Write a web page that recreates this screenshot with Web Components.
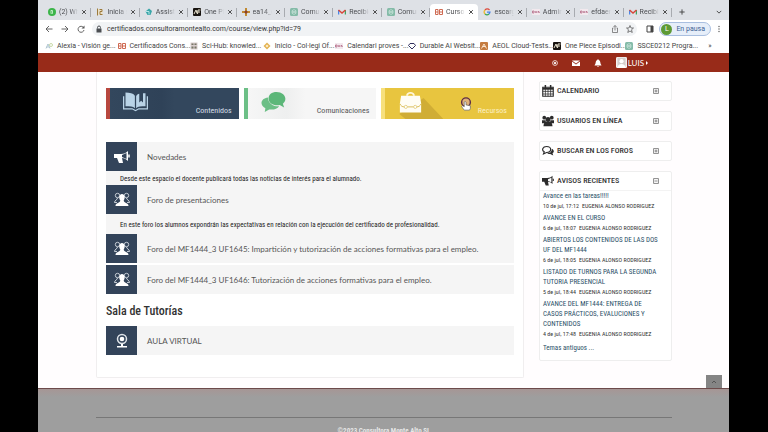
<!DOCTYPE html>
<html lang="es">
<head>
<meta charset="utf-8">
<meta name="viewport" content="width=device-width, initial-scale=1">
<title>Curso</title>
<style>
  * { box-sizing: border-box; }
  body { margin: 0; background: #000; font-family: Lato, "Open Sans", sans-serif; }
</style>
</head>
<body>
<browser-window>
  <tab-strip slot="chrome">
    <browser-tab icon="whatsapp">(2) WhatsApp</browser-tab>
    <browser-tab icon="crest">Inicia sesión</browser-tab>
    <browser-tab icon="assist">Assistència</browser-tab>
    <browser-tab icon="af">One Piece</browser-tab>
    <browser-tab icon="cross">ea14_curso</browser-tab>
    <browser-tab icon="gpt">Comunicación</browser-tab>
    <browser-tab icon="gmail">Recibidos</browser-tab>
    <browser-tab icon="gpt">Comunicación</browser-tab>
    <browser-tab icon="course" active>Curso: MF1444</browser-tab>
    <browser-tab icon="google">escargot</browser-tab>
    <browser-tab icon="gva">Administració</browser-tab>
    <browser-tab icon="gva">efdaem</browser-tab>
    <browser-tab icon="gmail">Recibidos</browser-tab>
  </tab-strip>
  <address-bar slot="chrome" url="certificados.consultoramontealto.com/course/view.php?id=79">En pausa</address-bar>
  <bookmark-bar slot="chrome">
    <bookmark-link icon="alexia">Alexia - Visión ge...</bookmark-link>
    <bookmark-link icon="course">Certificados Cons...</bookmark-link>
    <bookmark-link icon="scihub">Sci-Hub: knowled...</bookmark-link>
    <bookmark-link icon="diamond">Inicio - Col·legi Of...</bookmark-link>
    <bookmark-link icon="gva">Calendari proves -...</bookmark-link>
    <bookmark-link icon="heart">Durable AI Websit...</bookmark-link>
    <bookmark-link icon="aeol">AEOL Cloud-Tests...</bookmark-link>
    <bookmark-link icon="af">One Piece Episodi...</bookmark-link>
    <bookmark-link icon="gpt">SSCE0212 Progra...</bookmark-link>
  </bookmark-bar>

  <site-header>LUIS</site-header>
  <course-layout>
    <tile-row>
      <course-tile icon="book" theme="navy">Contenidos</course-tile>
      <course-tile icon="chat" theme="green">Comunicaciones</course-tile>
      <course-tile icon="case" theme="yellow">Recursos</course-tile>
    </tile-row>
    <activity-list>
      <activity-row icon="megaphone">Novedades
        <span slot="note">Desde este espacio el docente publicará todas las noticias de interés para el alumnado.</span>
      </activity-row>
      <activity-row icon="people" note-size="tall">Foro de presentaciones
        <span slot="note">En este foro los alumnos expondrán las expectativas en relación con la ejecución del certificado de profesionalidad.</span>
      </activity-row>
      <activity-row icon="people" spaced>Foro del MF1444_3 UF1645: Impartición y tutorización de acciones formativas para el empleo.</activity-row>
      <activity-row icon="people">Foro del MF1444_3 UF1646: Tutorización de acciones formativas para el empleo.</activity-row>
    </activity-list>
    <section-title>Sala de Tutorías</section-title>
    <activity-list>
      <activity-row icon="webcam">AULA VIRTUAL</activity-row>
    </activity-list>

    <side-block slot="side" icon="calendar" label="CALENDARIO"></side-block>
    <side-block slot="side" icon="group" label="USUARIOS EN LÍNEA"></side-block>
    <side-block slot="side" icon="comments" label="BUSCAR EN LOS FOROS"></side-block>
    <side-block slot="side" icon="horn" label="AVISOS RECIENTES" open>
      <news-item when="10 de jul, 17:12">Avance en las tareas!!!!!</news-item>
      <news-item when="6 de jul, 18:07">AVANCE EN EL CURSO</news-item>
      <news-item when="6 de jul, 18:05">ABIERTOS LOS CONTENIDOS DE LAS DOS UF DEL MF1444</news-item>
      <news-item when="5 de jul, 18:44">LISTADO DE TURNOS PARA LA SEGUNDA TUTORIA PRESENCIAL</news-item>
      <news-item when="4 de jul, 17:48">AVANCE DEL MF1444: ENTREGA DE CASOS PRÁCTICOS, EVALUCIONES Y CONTENIDOS</news-item>
      <more-link>Temas antiguos ...</more-link>
    </side-block>
  </course-layout>
  <site-footer>©2023 Consultora Monte Alto SL</site-footer>
</browser-window>

<script>
const CONDENSED = `"Roboto Condensed", "Liberation Sans Narrow", "Liberation Sans", sans-serif`;

const ICONS = {
  whatsapp: `<circle cx="8" cy="8" r="8" fill="#3cb54a"/><path d="M6 4.500v7M6 5h3v6H7" fill="none" stroke="#d9f5dc" stroke-width="1.600"/>`,
  crest: `<path d="M2 2h11v12H2z" fill="#eadfc6"/><path d="M3 1v14M7 3h5v4H8v6h5" fill="none" stroke="#9b7a3c" stroke-width="2"/>`,
  assist: `<path d="M8 1l6 5-3 8H5L1 7z" fill="#3aa6a8"/><path d="M1 7h7v6" fill="none" stroke="#b7e4e6" stroke-width="2"/>`,
  af: `<rect width="16" height="16" rx="2" fill="#17130f"/><path d="M2 12l4-8 2 7M9 12l1-8h5M9 8h5" fill="none" stroke="#e9e3cf" stroke-width="2"/>`,
  cross: `<path d="M6 0h4v6h6v4h-6v6H6v-6H0V6h6z" fill="#c18a32"/><circle cx="8" cy="8" r="3" fill="#8a3f2e"/>`,
  gpt: `<rect width="16" height="16" rx="3" fill="#84bba8"/><path d="M8 3l4 2.500v5L8 13l-4-2.500v-5zM4 6l8 4M12 6l-8 4" fill="none" stroke="#e2f3ec" stroke-width="1"/>`,
  gmail: `<path d="M1 13V4" stroke="#4a86e8" stroke-width="3"/><path d="M15 13V4" stroke="#43a463" stroke-width="3"/><path d="M1 4l7 6 7-6" fill="none" stroke="#d8473b" stroke-width="3"/>`,
  course: `<path d="M1 3h5v10H1zM9 3h6v10H9zM2 8h4M9 8h6" fill="none" stroke="#cf6a52" stroke-width="2"/>`,
  google: `<path d="M13 4a6 6 0 0 0-9 0" fill="none" stroke="#dd4b3e" stroke-width="2.500"/><path d="M4 4a6 6 0 0 0 0 8" fill="none" stroke="#edb82e" stroke-width="2.500"/><path d="M4 12a6 6 0 0 0 8 0" fill="none" stroke="#3aa757" stroke-width="2.500"/><path d="M8 8h6a6 6 0 0 1-2 4" fill="none" stroke="#4381ea" stroke-width="2.500"/>`,
  gva: `<rect y="2" width="16" height="12" fill="#f3e9ee"/><path d="M1 6h3v4H1zM6 6l2 4 2-4M12 10l1-4 2 4" fill="none" stroke="#b46a86" stroke-width="1.600"/>`,
  alexia: `<path d="M2 13l4-9 4 9M3 10h6" fill="none" stroke="#9ab6c4" stroke-width="1.500"/><circle cx="12" cy="6" r="3" fill="none" stroke="#b8cf8f" stroke-width="1.500"/>`,
  scihub: `<path d="M1 1h14v14H1z" fill="#d8cccc"/><path d="M3 3h4v3H3zM9 3h4v3H9zM3 9h4v4H3zM9 9h4v4H9z" fill="#776"/>`,
  diamond: `<path d="M8 1l7 7-7 7-7-7z" fill="#e3b352"/><path d="M8 5l3 3-3 3-3-3z" fill="#fff0d0"/>`,
  heart: `<path d="M4 3h8l3 4-7 7-7-7z" fill="none" stroke="#33335f" stroke-width="2"/>`,
  aeol: `<rect width="16" height="16" rx="2" fill="#c57c41"/><path d="M3 13l5-9 5 9M5 9h6" fill="none" stroke="#fbe6cf" stroke-width="2"/>`,
  back: `<path d="M15 8H2M8 2L2 8l6 6" fill="none" stroke="#555" stroke-width="1.800"/>`,
  forward: `<path d="M1 8h13M8 2l6 6-6 6" fill="none" stroke="#555" stroke-width="1.800"/>`,
  reload: `<path d="M13 5a6 6 0 1 0 1 5" fill="none" stroke="#555" stroke-width="1.800"/><path d="M15 1v6H9z" fill="#555"/>`,
  lock: `<path d="M3 7h10v8H3z" fill="#4b4e52"/><path d="M5 7V5a3 3 0 0 1 6 0v2" fill="none" stroke="#4b4e52" stroke-width="2"/>`,
  share: `<path d="M5 6H3v9h10V6h-2M8 11V1M5 4l3-3 3 3" fill="none" stroke="#666" stroke-width="1.500"/>`,
  star: `<path d="M8 1l2 5h5l-4 3.500 1.500 5.500L8 12l-4.500 3L5 9.500 1 6h5z" fill="none" stroke="#555" stroke-width="1.500"/>`,
  panel: `<path d="M2 2h12v12H2z" fill="none" stroke="#444" stroke-width="2"/><path d="M9 2h5v12H9z" fill="#444"/>`,
  kebab: `<g fill="#666"><circle cx="8" cy="3" r="1.500"/><circle cx="8" cy="8" r="1.500"/><circle cx="8" cy="13" r="1.500"/></g>`,
  close: `<path d="M3 3l10 10M13 3L3 13" stroke="#444" stroke-width="2.500"/>`,
  plus: `<path d="M8 1v14M1 8h14" stroke="#444" stroke-width="2.500"/>`,
  chevron: `<path d="M2 5l6 6 6-6" fill="none" stroke="#444" stroke-width="2.500"/>`,
  target: `<circle cx="8" cy="8" r="6.500" fill="none" stroke="#fff" stroke-width="2"/><circle cx="8" cy="8" r="3" fill="#fff"/>`,
  mail: `<path d="M0 3h16L8 9zM0 5l8 6 8-6v9H0z" fill="#fff"/>`,
  bell: `<path d="M8 0l1.500 2C12 3 12.500 5 13 9l2 4H1l2-4c.5-4 1-6 3.500-7zM6 14h4l-2 2z" fill="#fff"/>`,
  avatar: `<rect width="16" height="16" rx="2" fill="#f7f3f1"/><path d="M2 1h12v14H2z" fill="#d5cfcd"/><circle cx="8" cy="6" r="3" fill="#fff"/><path d="M2 16c0-8 12-8 12 0z" fill="#fff"/>`,
  book: `<path d="M2 8H0v21h15l5 3 5-3h15V8h-2v19H25l-5 3-5-3H2z" fill="#b9d3e6"/><path d="M4 2c7 0 12 1 15 5v20c-3-3-8-3-15-3zM36 3v21c-7 0-12 0-15 3V8c1-2 3-4 5-4v14l3-3 3 3V3z" fill="#b9d3e6"/>`,
  chat: `<path d="M25 1c8 0 14 5 14 11 0 4-2 6-4 8l2 6-7-4c-9 2-18-3-18-10S17 1 25 1z" fill="#5cb779"/><path d="M11 10c0 9 9 15 18 14-3 5-10 6-16 5l-7 4 1-6C-4 21 1 11 11 10z" fill="#6cbf86"/>`,
  case: `<path d="M13 7c0-8 14-8 14 0h-3c0-4-8-4-8 0z" fill="#fff6dc"/><path d="M5 7h30l2 12v15H3V19z" fill="#fffdf5"/><path d="M3 20c2 4 4 5 7 5M37 20c-2 4-4 5-7 5M15 25h10" fill="none" stroke="#d9bb52" stroke-width="1.500"/><circle cx="12.500" cy="25" r="2.500" fill="#fff" stroke="#d9bb52"/><circle cx="27.500" cy="25" r="2.500" fill="#fff" stroke="#d9bb52"/>`,
  megaphone: `<path d="M0 5h7c3 0 5-1 7-3v10c-2-2-4-3-6-3l1 5H5L3 9H0z" fill="#fff"/><path d="M8 6l4.500-2v6L8 8z" fill="#33445a"/><path d="M15 5.500v3" stroke="#fff" stroke-width="1.500"/>`,
  people: `<g fill="none" stroke="#e6ebf0" stroke-width=".8"><circle cx="3.500" cy="3.500" r="2.200"/><circle cx="12.500" cy="3.500" r="2.200"/><path d="M3.500 6c0 2-3 2-3 4.500H3M12.500 6c0 2 3 2 3 4.500H13"/></g><path d="M8 2c3 0 3.500 4 1.700 6.500 0 2.500 4.800 2 4.800 5.500h-13c0-3.500 4.800-3 4.800-5.500C4.500 6 5 2 8 2z" fill="#fff"/>`,
  webcam: `<circle cx="8" cy="6" r="4.500" fill="none" stroke="#dfe4e9" stroke-width="1.500"/><circle cx="8" cy="6" r="2.300" fill="#fff"/><path d="M7 11h2v2h4v1.500H3V13h4z" fill="#fff"/>`,
  calendar: `<path d="M1 3h14v12H1z" fill="none" stroke="#2c2c2c" stroke-width="1.500"/><path d="M1 5h14" stroke="#2c2c2c" stroke-width="2.500"/><path d="M1 8.500h14M1 12h14M4.500 5v10M8 5v10M11.500 5v10" stroke="#2c2c2c" stroke-width="1"/><path d="M4.500 0v4M11.500 0v4" stroke="#2c2c2c" stroke-width="2"/>`,
  group: `<g fill="#2c2c2c"><circle cx="3" cy="3.500" r="2.500"/><circle cx="13" cy="3.500" r="2.500"/><circle cx="8" cy="6" r="3.200"/><path d="M0 7h5v4H0zM11 7h5v4h-5zM2 15c0-9 12-9 12 0z"/></g>`,
  comments: `<path d="M6 2c3 0 5.500 1.500 5.500 4S9 10 6 10l-4 2 1-3C-1 7 1 2 6 2z" fill="#fff" stroke="#2c2c2c" stroke-width="1.500"/><path d="M13 5c4 2 3 5 1 6l1 3-4-2c-2 0-3 0-4-1 4 0 6-2 6-6z" fill="#2c2c2c"/>`,
  horn: `<path d="M0 4h7c3 0 5-1 7-3v11c-2-2-4-3-6-3l1 5H5L3 9H0z" fill="#2c2c2c"/><path d="M8 5.500l4.500-2v6L8 8z" fill="#fff"/><path d="M15 5v3" stroke="#2c2c2c" stroke-width="1.500"/>`,
  expand: `<path d="M1.500 1.500h13v13h-13zM8 4v8M4 8h8" fill="none" stroke="#555" stroke-width="1.800"/>`,
  collapse: `<path d="M1.500 1.500h13v13h-13zM4 8h8" fill="none" stroke="#555" stroke-width="1.800"/>`,
  up: `<path d="M4 10l4-4 4 4" fill="none" stroke="#555" stroke-width="2"/>`,
  hand: `<circle cx="8" cy="6" r="5" fill="#e0b27a" stroke="#5b2c46" stroke-width="1.600"/><path d="M6 15l-3-4 1-1 2 1V6c0-1 2-1 2 0v3l5 1v3l-1 2z" fill="#fff" stroke="#555" stroke-width=".7"/>`,
};
const WIDE = ["book", "chat", "case"];

function icon(name) {
  const box = WIDE.includes(name) ? "0 0 40 36" : "0 0 16 16";
  return `<svg class="icon ${name}" viewBox="${box}" aria-hidden="true">${ICONS[name]}</svg>`;
}

const BASE = `
  * { box-sizing: border-box; }
  :host { display: block; }
  .icon { display: block; flex: none; width: 8px; height: 8px; }
  button { display: flex; align-items: center; justify-content: center; margin: 0; padding: 0; border: 0; background: none; font: inherit; color: inherit; cursor: pointer; }
  a { color: inherit; text-decoration: none; }
`;

class BaseElement extends HTMLElement {
  constructor() {
    super();
    this.attachShadow({ mode: "open" });
  }

  connectedCallback() {
    this.shadowRoot.innerHTML = `<style>${BASE}${this.css}</style>${this.html}`;
  }

  attr(name) {
    return this.getAttribute(name) || "";
  }
}

class BrowserWindow extends BaseElement {
  css = `
    :host { position: relative; display: flex; flex-direction: column; height: 100vh; margin: 0 39px 0 38px; overflow: hidden; background: #fffdfe; }
    .chrome { flex: none; font-family: Roboto, sans-serif; background: #fff; }
    .top { position: absolute; right: 7px; bottom: 44px; width: 16px; height: 13px; background: #858585; }
  `;
  html = `
    <div class="chrome"><slot name="chrome"></slot></div>
    <slot></slot>
    <button class="top" aria-label="Subir">${icon("up")}</button>
  `;
}

class TabStrip extends BaseElement {
  css = `
    :host { display: flex; align-items: center; height: 20px; padding: 0 7px 0 5px; background: #dee1e6; }
    .tabs { flex: 1; display: grid; grid-template-columns: repeat(13, minmax(0, 1fr)); align-self: stretch; padding-top: 4px; }
    .end { flex: none; display: flex; align-items: center; justify-content: space-between; width: 50px; padding: 4px 0 0 7px; }
    .icon { width: 6px; height: 6px; }
  `;
  html = `
    <div class="tabs"><slot></slot></div>
    <div class="end">
      <button aria-label="Nueva pestaña">${icon("plus")}</button>
      <button aria-label="Buscar pestañas">${icon("chevron")}</button>
    </div>
  `;
}

class BrowserTab extends BaseElement {
  get css() {
    return `
      :host { display: flex; align-items: center; gap: 3px; height: 16px; padding-left: 5px; font-size: 7px; color: #4a4c50; border-radius: 4px 4px 0 0; }
      :host([active]) { background: #fff; }
      .title { flex: 1; overflow: hidden; white-space: nowrap; line-height: 10px; mask-image: linear-gradient(90deg, #000 60%, transparent); }
      .icon.close { width: 6px; height: 6px; }
      .line { width: 1px; height: 9px; background: #a8abb0; }
      :host([active]) .line { background: none; }
    `;
  }
  get html() {
    return `${icon(this.attr("icon"))}<span class="title"><slot></slot></span>
      <button aria-label="Cerrar">${icon("close")}</button><span class="line"></span>`;
  }
}

class AddressBar extends BaseElement {
  css = `
    :host { display: flex; align-items: center; height: 18px; padding: 0 6px 0 7px; font-size: 7px; }
    .nav { display: flex; gap: 8px; margin-right: 7px; }
    .field { flex: 1; display: flex; align-items: center; gap: 7px; min-width: 0; height: 14px; padding: 0 3px; border-radius: 7px; background: #f1f3f5; }
    .field .lock { margin-right: -3px; }
    input { flex: 1; min-width: 0; margin: 0; padding: 0; border: 0; outline: 0; font: inherit; color: #333; background: none; }
    .icon.panel { margin: 0 5px 0 9px; }
    .profile { gap: 4px; height: 14px; padding: 0 5px 0 1px; border: 1px solid #a9bfe0; border-radius: 7px; color: #3d5f94; background: #e6eef9; }
    .face { width: 11px; height: 11px; border-radius: 50%; background: #5d9a35; color: #fff; line-height: 11px; text-align: center; }
    .icon.kebab { margin-left: 4px; }
  `;
  get html() {
    return `
      <div class="nav">
        <button aria-label="Atrás">${icon("back")}</button>
        <button aria-label="Adelante">${icon("forward")}</button>
        <button aria-label="Recargar">${icon("reload")}</button>
      </div>
      <div class="field">${icon("lock")}
        <input type="text" aria-label="Dirección" value="${this.attr("url")}">
        ${icon("share")}${icon("star")}
      </div>
      ${icon("panel")}
      <button class="profile"><span class="face">L</span><slot></slot></button>
      ${icon("kebab")}
    `;
  }
}

class BookmarkBar extends BaseElement {
  css = `
    :host { display: flex; align-items: center; height: 15px; padding: 0 7px; font-size: 7px; color: #444; }
    .links { flex: 1; display: grid; grid-template-columns: repeat(9, minmax(0, 1fr)); }
    .more { flex: none; justify-content: center; width: 24px; }
  `;
  html = `<div class="links"><slot></slot></div><button class="more" aria-label="Más marcadores">»</button>`;
}

class BookmarkLink extends BaseElement {
  css = `
    a { display: flex; align-items: center; gap: 4px; line-height: 10px; white-space: nowrap; }
  `;
  get html() {
    return `<a href="#">${icon(this.attr("icon"))}<slot></slot></a>`;
  }
}

class SiteHeader extends BaseElement {
  css = `
    :host { flex: none; display: flex; align-items: center; justify-content: flex-end; gap: 14px; height: 19px; padding-right: 81px; background: #982b19; color: #fff; font-size: 8px; }
    .icon.target { width: 6px; height: 6px; }
    .icon.avatar { width: 11px; height: 11px; }
    .user { gap: 1px; }
    .caret { border: 2px solid transparent; border-left-color: #fff; border-right: 0; margin-left: 1px; }
  `;
  html = `
    <button aria-label="Objetivos">${icon("target")}</button>
    <button aria-label="Mensajes">${icon("mail")}</button>
    <button aria-label="Avisos">${icon("bell")}</button>
    <button class="user">${icon("avatar")}<slot></slot><span class="caret"></span></button>
  `;
}

class CourseLayout extends BaseElement {
  css = `
    :host { flex: none; display: grid; grid-template-columns: minmax(0, 1fr) 133px; gap: 15px; padding: 0 57px 10px 58px; }
    main { padding: 16px 9px 22px; border: 1px solid #f0eeef; border-top: 0; border-radius: 0 0 2px 2px; background: #fff; }
    aside { display: flex; flex-direction: column; gap: 10px; padding-top: 9px; }
  `;
  html = `<main><slot></slot></main><aside><slot name="side"></slot></aside>`;
}

class TileRow extends BaseElement {
  css = `:host { display: grid; grid-template-columns: repeat(3, minmax(0, 1fr)); gap: 5px; margin-bottom: 23px; }`;
  html = `<slot></slot>`;
}

class CourseTile extends BaseElement {
  css = `
    a { position: relative; display: flex; align-items: flex-end; justify-content: space-between; height: 31px; padding: 0 7px 3px 13px; border-left: 4px solid var(--edge); background: var(--fill); color: var(--ink); font: 8px/10px ${CONDENSED}; }
    .icon { width: 25px; height: 23px; align-self: flex-start; margin-top: 3px; }
    :host([theme="navy"]) { --edge: #b8483f; --fill: linear-gradient(90deg, #33475d, #2f4258 40%, #33475d 50%); --ink: #d6dfe8; }
    :host([theme="green"]) { --edge: #6cbf86; --fill: linear-gradient(90deg, #f6f6f6, #eeefef 30%, #f6f6f6 45%); --ink: #555; }
    :host([theme="yellow"]) { --edge: #f7e07c; --fill: #e8c53f; --ink: #fbf0c4; }
    .shade { position: absolute; left: 14px; bottom: 0; width: 44px; height: 21px; background: #d0ad35; clip-path: polygon(0 76%, 55% 0, 100% 100%, 14% 100%); }
    .icon.case { position: relative; }
    .icon.hand { position: absolute; right: 41px; top: 8px; width: 14px; height: 16px; margin: 0; }
  `;
  get html() {
    const over = this.attr("theme") === "yellow";
    return `<a href="#">${over ? `<span class="shade"></span>` : ""}${icon(this.attr("icon"))}<slot></slot>${over ? icon("hand") : ""}</a>`;
  }
}

class ActivityList extends BaseElement {
  css = `:host { display: flex; flex-direction: column; }`;
  html = `<slot></slot>`;
}

class ActivityRow extends BaseElement {
  css = `
    :host { background: #f5f5f5; }
    :host([spaced]) { margin-bottom: 2px; }
    a { display: flex; align-items: center; gap: 10px; color: #555; font-size: 8px; line-height: 10px; }
    .badge { display: flex; align-items: center; justify-content: center; width: 31px; height: 29px; background: #33445a; }
    .icon { width: 16px; height: 16px; }
    .note { display: flex; align-items: center; height: 14px; padding: 2px 0 0 14px; font: 7px/10px ${CONDENSED}; color: #222; }
    :host([note-size="tall"]) .note { height: 20px; }
  `;
  get html() {
    const note = this.querySelector("[slot=note]") ? `<div class="note"><slot name="note"></slot></div>` : "";
    return `<a href="#"><span class="badge">${icon(this.attr("icon"))}</span><span><slot></slot></span></a>${note}`;
  }
}

class SectionTitle extends BaseElement {
  css = `h2 { margin: 10px 0 8px; font: 500 12px/14px ${CONDENSED}; color: #333; }`;
  html = `<h2><slot></slot></h2>`;
}

class SideBlock extends BaseElement {
  static observedAttributes = ["open"];

  attributeChangedCallback() {
    if (this.isConnected && this.shadowRoot.innerHTML) this.connectedCallback();
  }

  connectedCallback() {
    super.connectedCallback();
    this.shadowRoot.querySelector("button").addEventListener("click", () => this.toggleAttribute("open"));
  }

  css = `
    :host { border: 1px solid #eee; border-radius: 2px; background: #fff; }
    header { display: flex; align-items: center; gap: 3px; height: 18px; padding: 0 12px 0 2px; }
    h3 { flex: 1; margin: 0; font: 500 8px/10px ${CONDENSED}; color: #333; }
    .icon { width: 12px; height: 12px; }
    button .icon { width: 6px; height: 6px; }
    .body { display: flex; flex-direction: column; gap: 3px; padding: 0 10px 7px 3px; border-top: 1px solid #f3f3f3; }
  `;
  get html() {
    const open = this.hasAttribute("open");
    return `
      <header>${icon(this.attr("icon"))}<h3>${this.attr("label")}</h3>
        <button aria-label="${this.attr("label")}" aria-expanded="${open}">${icon(open ? "collapse" : "expand")}</button>
      </header>
      ${open ? `<div class="body"><slot></slot></div>` : ""}
    `;
  }
}

class NewsItem extends BaseElement {
  css = `
    a { display: block; font: 7px/10px ${CONDENSED}; color: #2b5068; }
    .meta { display: flex; gap: 3px; font: 6px/9px ${CONDENSED}; color: #333; white-space: nowrap; }
  `;
  get html() {
    return `<a href="#"><slot></slot></a>
      <div class="meta"><time>${this.attr("when")}</time><span>EUGENIA ALONSO RODRIGUEZ</span></div>`;
  }
}

class MoreLink extends BaseElement {
  css = `:host { padding-top: 2px; font: 7px/10px ${CONDENSED}; color: #2b5068; }`;
  html = `<a href="#"><slot></slot></a>`;
}

class SiteFooter extends BaseElement {
  css = `
    :host { flex: 1 0 auto; padding: 28px 57px 0 58px; border-top: 1px solid #6d4b4b; background: linear-gradient(#a69695, #9e9e9e 8px); }
    p { margin: 0; padding-top: 8px; border-top: 1px solid #777; font: 700 7px/10px ${CONDENSED}; color: #e8e8e8; text-align: center; }
  `;
  html = `<p><slot></slot></p>`;
}

customElements.define("browser-window", BrowserWindow);
customElements.define("tab-strip", TabStrip);
customElements.define("browser-tab", BrowserTab);
customElements.define("address-bar", AddressBar);
customElements.define("bookmark-bar", BookmarkBar);
customElements.define("bookmark-link", BookmarkLink);
customElements.define("site-header", SiteHeader);
customElements.define("course-layout", CourseLayout);
customElements.define("tile-row", TileRow);
customElements.define("course-tile", CourseTile);
customElements.define("activity-list", ActivityList);
customElements.define("activity-row", ActivityRow);
customElements.define("section-title", SectionTitle);
customElements.define("side-block", SideBlock);
customElements.define("news-item", NewsItem);
customElements.define("more-link", MoreLink);
customElements.define("site-footer", SiteFooter);
</script>
</body>
</html>
